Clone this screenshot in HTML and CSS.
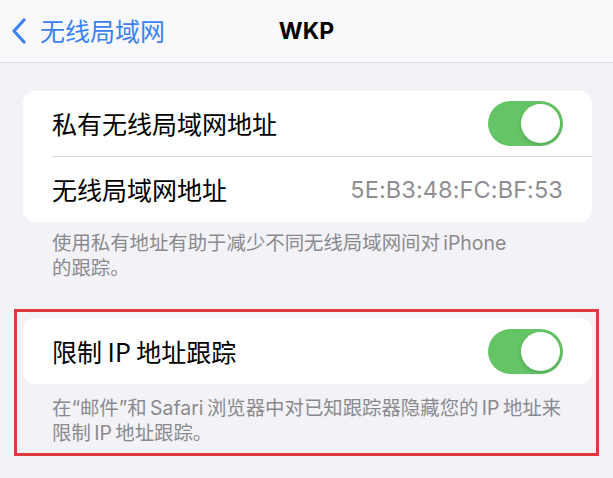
FILE: index.html
```html
<!DOCTYPE html>
<html lang="zh-CN">
<head>
<meta charset="utf-8">
<title>WKP</title>
<link rel="stylesheet" href="styles.css">
</head>
<body>
<header class="nav">
  <div class="back">
    <svg class="chev" width="16" height="26" viewBox="0 0 16 26"><path d="M13 2 L3 13 L13 24" fill="none" stroke="#3a82f6" stroke-width="3.2" stroke-linecap="round" stroke-linejoin="round"/></svg>
    <span class="back-text">无线局域网</span>
  </div>
  <div class="title">WKP</div>
</header>
<main class="content">
  <section class="card">
    <div class="row">
      <span class="label">私有无线局域网地址</span>
      <span class="toggle"><span class="knob"></span></span>
    </div>
    <div class="sep"></div>
    <div class="row">
      <span class="label">无线局域网地址</span>
      <span class="value">5E:B3:48:FC:BF:53</span>
    </div>
  </section>
  <p class="footer f1">使用私有地址有助于减少不同无线局域网间对 iPhone<br>的跟踪。</p>
  <div class="highlight">
    <section class="card">
      <div class="row row2">
        <span class="label">限制 IP 地址跟踪</span>
        <span class="toggle"><span class="knob"></span></span>
      </div>
    </section>
    <p class="footer f2">在“邮件”和 Safari 浏览器中对已知跟踪器隐藏您的 IP 地址来<br>限制 IP 地址跟踪。</p>
  </div>
  <div class="next">使用</div>
</main>
</body>
</html>
```
FILE: styles.css
```css
* { box-sizing: border-box; }
html, body {
  margin: 0;
  padding: 0;
  background: #f2f2f7;
  font-family: "Inter", "Noto Sans CJK SC", sans-serif;
  overflow: hidden;
  height: 478px;
}
.nav {
  height: 63px;
  background: #f9f9fb;
  border-bottom: 1px solid #dedee2;
  display: flex;
  align-items: center;
  position: relative;
}
.back {
  display: flex;
  align-items: center;
  padding-left: 11px;
  gap: 13px;
  margin-top: -1px;
}
.chev { display: block; }
.back-text {
  font-family: "Noto Sans CJK SC", sans-serif;
  font-size: 25px;
  color: #3a82f6;
  line-height: 1;
}
.title {
  position: absolute;
  left: 0;
  right: 0;
  top: 0;
  bottom: 0;
  display: flex;
  align-items: center;
  justify-content: center;
  font-family: "Inter", sans-serif;
  font-weight: 700;
  font-size: 23px;
  color: #000;
  pointer-events: none;
}
.content {
  padding: 28px 21px 0 23px;
}
.card {
  background: #fff;
  border-radius: 12px;
  overflow: hidden;
}
.row {
  height: 65px;
  display: flex;
  align-items: center;
  justify-content: space-between;
  padding: 0 29px;
}
.row2 { height: 66px; }
.sep {
  height: 1px;
  background: #d9d9dd;
  margin-left: 29px;
}
.label {
  font-family: "Noto Sans CJK SC", sans-serif;
  font-size: 25px;
  color: #000;
  line-height: 1;
}
.value {
  font-family: "Inter", sans-serif;
  font-size: 23.5px;
  color: #8e8e93;
  letter-spacing: 0.1px;
}
.toggle {
  width: 75px;
  height: 45px;
  border-radius: 23px;
  background: #65c466;
  display: flex;
  align-items: center;
  justify-content: flex-end;
  padding-right: 3px;
}
.knob {
  width: 39px;
  height: 39px;
  border-radius: 50%;
  background: #fff;
  box-shadow: 0 2px 4px rgba(0,0,0,0.15);
}
.footer {
  margin: 0;
  font-family: "Inter", "Noto Sans CJK SC", sans-serif;
  font-size: 19.4px;
  line-height: 25px;
  word-spacing: -2px;
  color: #8a8a8e;
  padding-left: 29px;
}
.f1 { padding-top: 9px; }
.f2 { padding-top: 12px; padding-bottom: 7px; }
.highlight {
  margin: 28px -7px 0 -9px;
  border: 3px solid #e2393f;
  padding: 6px 4px 0 6px;
}
.next {
  margin-top: 22px;
  padding-left: 97px;
  font-family: "Noto Sans CJK SC", sans-serif;
  font-size: 25px;
  color: #000;
}
```
